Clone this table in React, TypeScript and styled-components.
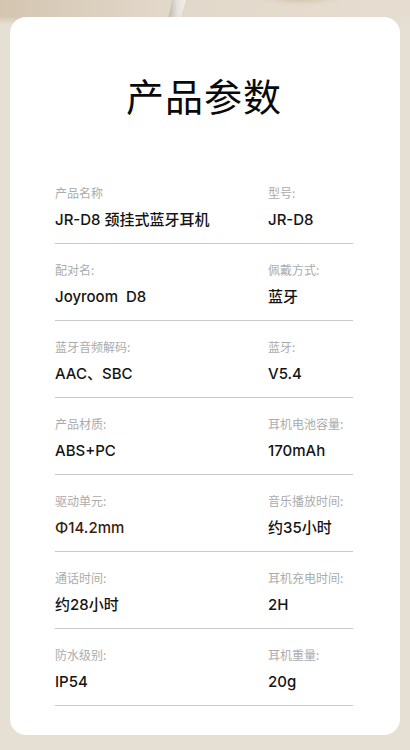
import React from "react";
import styled, { createGlobalStyle } from "styled-components";

const Global = createGlobalStyle`
  html, body { margin: 0; padding: 0; }
  body {
    background: #e6dfd4;
    font-family: Inter, "Noto Sans CJK SC", "Noto Sans", sans-serif;
  }
`;

const Page = styled.div`
  position: relative;
  width: 410px;
  min-height: 750px;
  padding: 17px 10px 17px 10px;
  box-sizing: border-box;
  background: #e6dfd4;
  overflow: hidden;
`;

const Backdrop = styled.svg`
  position: absolute;
  left: 0;
  top: 0;
  width: 410px;
  height: 24px;
  pointer-events: none;
`;

const Card = styled.section`
  position: relative;
  background: #ffffff;
  border-radius: 16px;
  padding: 54px 47px 29px 45px;
  box-sizing: border-box;
`;

const Title = styled.h1`
  margin: 0 0 48px 0;
  text-align: center;
  font-family: "Noto Sans CJK SC", sans-serif;
  font-size: 38px;
  line-height: 48px;
  font-weight: 400;
  color: #0a0a0a;
  letter-spacing: 1px;
`;

const Row = styled.div`
  display: grid;
  grid-template-columns: 213px 1fr;
  padding: 18px 0 13px 0;
  border-bottom: 1px solid #c9c9c9;
`;

const Cell = styled.div`
  display: flex;
  flex-direction: column;
  gap: 9px;
`;

const Label = styled.span`
  font-family: "Noto Sans CJK SC", sans-serif;
  font-size: 12px;
  line-height: 16px;
  color: #ababab;
  white-space: nowrap;
`;

const Value = styled.span<{ $accent?: boolean }>`
  font-size: 15px;
  line-height: 20px;
  font-weight: 500;
  color: ${(p) => (p.$accent ? "#3b1c0f" : "#141414")};
  white-space: pre;
`;

type Item = { label: string; value: string; accent?: boolean };

const rows: [Item, Item][] = [
  [
    { label: "产品名称", value: "JR-D8 颈挂式蓝牙耳机" },
    { label: "型号:", value: "JR-D8" },
  ],
  [
    { label: "配对名:", value: "Joyroom  D8" },
    { label: "佩戴方式:", value: "蓝牙" },
  ],
  [
    { label: "蓝牙音频解码:", value: "AAC、SBC" },
    { label: "蓝牙:", value: "V5.4" },
  ],
  [
    { label: "产品材质:", value: "ABS+PC" },
    { label: "耳机电池容量:", value: "170mAh" },
  ],
  [
    { label: "驱动单元:", value: "Φ14.2mm", accent: true },
    { label: "音乐播放时间:", value: "约35小时" },
  ],
  [
    { label: "通话时间:", value: "约28小时" },
    { label: "耳机充电时间:", value: "2H" },
  ],
  [
    { label: "防水级别:", value: "IP54" },
    { label: "耳机重量:", value: "20g" },
  ],
];

export default function App() {
  return (
    <>
      <Global />
      <Page>
        <Backdrop viewBox="0 0 410 24" preserveAspectRatio="none">
          <defs>
            <linearGradient id="bg" x1="0" x2="1" y1="0" y2="0">
              <stop offset="0" stopColor="#d3c5b0" />
              <stop offset="0.4" stopColor="#e2d8ca" />
              <stop offset="1" stopColor="#e6ddd0" />
            </linearGradient>
            <linearGradient id="fade" x1="0" x2="0" y1="0" y2="1">
              <stop offset="0" stopColor="#fff" />
              <stop offset="0.7" stopColor="#fff" />
              <stop offset="1" stopColor="#000" />
            </linearGradient>
            <mask id="m">
              <rect x="0" y="0" width="410" height="24" fill="url(#fade)" />
            </mask>
            <radialGradient id="blob" cx="0.5" cy="0.2" r="0.5">
              <stop offset="0" stopColor="#c9b596" />
              <stop offset="0.6" stopColor="#d6c7b0" />
              <stop offset="1" stopColor="#e2d8ca" stopOpacity="0" />
            </radialGradient>
            <linearGradient id="cable" x1="0" x2="1" y1="0" y2="0">
              <stop offset="0" stopColor="#bdb6ab" />
              <stop offset="0.5" stopColor="#e4e0da" />
              <stop offset="1" stopColor="#f2efea" />
            </linearGradient>
          </defs>
          <g mask="url(#m)">
            <rect x="0" y="0" width="410" height="24" fill="url(#bg)" />
            <ellipse cx="300" cy="0" rx="55" ry="18" fill="url(#blob)" />
            <path d="M172 0 L186 0 L180 20 L168 20 Z" fill="url(#cable)" />
          </g>
        </Backdrop>
        <Card>
          <Title>产品参数</Title>
          {rows.map((r, i) => (
            <Row key={i}>
              {r.map((c, j) => (
                <Cell key={j}>
                  <Label>{c.label}</Label>
                  <Value $accent={c.accent}>{c.value}</Value>
                </Cell>
              ))}
            </Row>
          ))}
        </Card>
      </Page>
    </>
  );
}
